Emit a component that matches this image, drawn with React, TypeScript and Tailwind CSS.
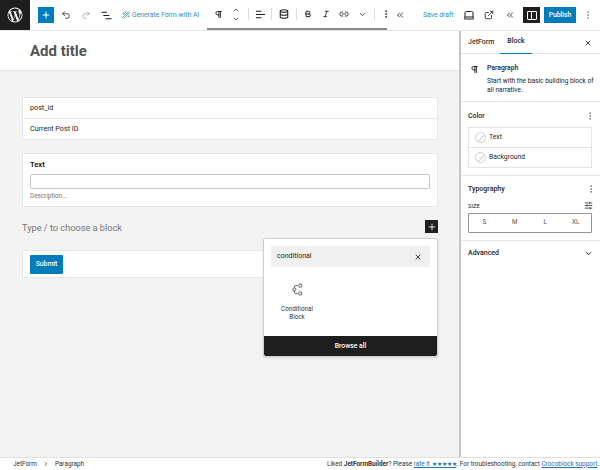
import React from 'react';
import { Plus, Undo2, Redo2, Wand2, Pilcrow, ChevronUp, ChevronDown, Database, Bold, Italic, Link2, MoreVertical, ChevronsLeft, Laptop, ExternalLink, X, SlidersHorizontal, ChevronRight } from 'lucide-react';

const WpLogo = () => (
  <svg viewBox="0 0 24 24" className="w-[18px] h-[18px]" fill="#fff">
    <path d="M12 2a10 10 0 1 0 0 20 10 10 0 0 0 0-20zM3.2 12c0-1.3.3-2.500.8-3.600l4.200 11.500A8.800 8.800 0 0 1 3.200 12zm8.800 8.800c-.9 0-1.700-.1-2.500-.4l2.600-7.700 2.700 7.500c0 0 0 .1.100.1-.9.300-1.900.5-2.900.5zm1.200-12.900c.5 0 1-.1 1-.1.500-.1.400-.8-.1-.7 0 0-1.400.1-2.300.1-.9 0-2.300-.1-2.300-.1-.5 0-.5.700-.1.700 0 0 .5.100.9.100l1.400 3.800-1.900 5.800-3.200-9.600c.5 0 1-.1 1-.1.500-.1.400-.8-.1-.7 0 0-1.400.1-2.300.1h-.6A8.800 8.800 0 0 1 18 5.600h-.1c-.9 0-1.500.7-1.500 1.500 0 .7.400 1.300.9 2.100.3.600.7 1.300.7 2.400 0 .7-.3 1.600-.7 2.700l-.9 3-3.200-9.400zm3.200 11.700 2.700-7.800c.5-1.300.7-2.300.7-3.200 0-.3 0-.6-.1-.9a8.800 8.800 0 0 1-3.300 11.900z" />
  </svg>
);

const ConditionalIcon = () => (
  <svg viewBox="0 0 14 16" className="w-[11px] h-[13px]" fill="none" stroke="#333" strokeWidth="1">
    <circle cx="3" cy="8" r="2" />
    <path d="M3 6V4.500Q3 3 5 3h2M3 10v1.500Q3 13 5 13h2" />
    <rect x="8.500" y="1" width="4" height="4" rx="1.500" />
    <rect x="8.500" y="11" width="4" height="4" rx="1.500" />
  </svg>
);

// three staggered lines, WP list view
const ListViewIcon = () => (
  <svg viewBox="0 0 12 12" className="w-[11px] h-[11px]" fill="none" stroke="#1e1e1e" strokeWidth="1.200">
    <path d="M0.500 2.500h6M2.500 6h6.500M5 9.500h6.500" />
  </svg>
);

const AlignIcon = () => (
  <svg viewBox="0 0 12 12" className="w-[11px] h-[11px]" fill="none" stroke="#1e1e1e" strokeWidth="1.100">
    <path d="M1 2.500h6M1 6h10M1 9.500h6" />
  </svg>
);

const Swatch = () => (
  <span className="relative w-[11px] h-[11px] rounded-full border border-[#cfcfcf] overflow-hidden shrink-0">
    <span className="absolute left-1/2 top-[-2px] h-[14px] w-px bg-[#cfcfcf] rotate-45" />
  </span>
);

const Sep = ({ className = '' }: { className?: string }) => (
  <span className={`w-px h-3 bg-[#ddd] shrink-0 ${className}`} />
);

const App: React.FC = () => {
  return (
    <div className="h-[470px] w-[600px] flex flex-col overflow-hidden bg-white text-[#1e1e1e] font-['Roboto',sans-serif]">
      {/* Top toolbar */}
      <header className="h-[31px] shrink-0 flex items-center border-b border-[#e5e5e5]">
        <div className="w-[30px] h-[30px] shrink-0 bg-[#1e1e1e] flex items-center justify-center">
          <WpLogo />
        </div>
        <div className="ml-2 w-4 h-4 shrink-0 bg-[#007cba] flex items-center justify-center">
          <Plus className="w-2.5 h-2.5 text-white" strokeWidth={2.5} />
        </div>
        <div className="w-[24px] flex justify-center shrink-0"><Undo2 className="w-[10px] h-[10px] text-[#333]" /></div>
        <div className="w-[16px] flex justify-center shrink-0"><Redo2 className="w-[10px] h-[10px] text-[#aaa]" /></div>
        <div className="w-[24px] flex justify-center shrink-0"><ListViewIcon /></div>
        <div className="ml-[4px] w-[85px] shrink-0 flex items-center gap-[2px] text-[#2b8fc4] text-[6.800px] leading-none whitespace-nowrap">
          <Wand2 className="w-2 h-2" />
          <span>Generate Form with AI</span>
        </div>
        <div className="w-[180px] h-[30px] shrink-0 flex items-center border-b-[2px] border-[#8a8a8a]">
          <div className="w-[22px] flex justify-center shrink-0"><Pilcrow className="w-[9px] h-[9px]" strokeWidth={2.500} /></div>
          <div className="w-[14px] flex flex-col items-center shrink-0">
            <ChevronUp className="w-2 h-2" />
            <ChevronDown className="w-2 h-2 mt-[1px]" />
          </div>
          <Sep className="ml-[5px]" />
          <div className="w-[22px] flex justify-center shrink-0"><AlignIcon /></div>
          <Sep />
          <div className="w-[24px] flex justify-center shrink-0"><Database className="w-[10px] h-[10px]" strokeWidth={2.500} /></div>
          <Sep />
          <div className="w-[22px] flex justify-center shrink-0"><Bold className="w-[8px] h-[8px]" strokeWidth={3} /></div>
          <div className="w-[14px] flex justify-center shrink-0"><Italic className="w-[8px] h-[8px]" strokeWidth={2.500} /></div>
          <div className="w-[22px] flex justify-center shrink-0"><Link2 className="w-[10px] h-[10px]" /></div>
          <div className="w-[14px] flex justify-center shrink-0"><ChevronDown className="w-[9px] h-[9px]" /></div>
          <Sep className="ml-[5px]" />
          <div className="w-[22px] flex justify-center shrink-0"><MoreVertical className="w-[10px] h-[10px]" /></div>
        </div>
        <ChevronsLeft className="ml-[8px] w-[10px] h-[10px] shrink-0" />
        <span className="ml-[18px] w-[28px] shrink-0 text-[6.800px] text-[#2b8fc4] whitespace-nowrap">Save draft</span>
        <Laptop className="ml-[12px] w-[12px] h-[12px] shrink-0" />
        <ExternalLink className="ml-[9px] w-[10px] h-[10px] shrink-0" />
        <ChevronsLeft className="ml-[11px] w-[10px] h-[10px] shrink-0" />
        <div className="ml-[8px] w-[17px] h-[16px] shrink-0 bg-[#1e1e1e] flex items-center justify-center">
          <div className="w-[10px] h-[9px] border border-white rounded-[1px] flex justify-center">
            <span className="w-px h-full bg-white" />
          </div>
        </div>
        <div className="ml-[4px] w-[32px] h-4 shrink-0 bg-[#007cba] text-white text-[6.800px] font-medium flex items-center justify-center">Publish</div>
        <MoreVertical className="ml-[7px] w-[10px] h-[10px] shrink-0 text-[#888]" />
      </header>

      <div className="flex-1 flex min-h-0">
        {/* Editor canvas */}
        <main className="w-[459px] shrink-0 flex flex-col bg-[#f3f3f3] relative">
          <div className="h-[40px] bg-white border-b border-[#e5e5e5] pl-[30px] pt-[2px] flex items-center">
            <span className="text-[15px] font-bold text-[#555] leading-none">Add title</span>
          </div>

          <div className="w-[416px] ml-[22px] mt-[26px] flex flex-col gap-[13px]">
            <div className="bg-white border border-[#e8e8e8] text-[7.200px]">
              <div className="h-[21px] pl-[7px] flex items-center border-b border-[#e8e8e8]">post_id</div>
              <div className="h-[20px] pl-[7px] flex items-center">Current Post ID</div>
            </div>

            <div className="h-[54px] bg-white border border-[#e8e8e8] px-[7px] pt-[6px]">
              <div className="text-[7.500px] font-bold leading-[10px]">Text</div>
              <div className="mt-[4px] h-[15px] border border-[#c8c8c8] rounded-[2px] bg-white" />
              <div className="mt-[3px] text-[6.300px] leading-[9px] text-[#757575]">Description...</div>
            </div>
          </div>

          <div className="w-[416px] ml-[22px] mt-[13px] h-[18px] flex items-start justify-between">
            <span className="text-[9.200px] leading-[16px] text-[#757575]">Type / to choose a block</span>
            <div className="w-[13px] h-[13px] bg-[#1e1e1e] flex items-center justify-center">
              <Plus className="w-2.5 h-2.5 text-white" strokeWidth={2} />
            </div>
          </div>

          <div className="w-[416px] ml-[22px] mt-[12px] h-[28px] bg-white border border-[#e8e8e8] pl-[7px] flex items-center">
            <div className="w-[33px] h-[19px] bg-[#007cba] rounded-[1px] text-white text-[6.800px] font-medium flex items-center justify-center">Submit</div>
          </div>

          {/* Block inserter popover */}
          <div className="absolute left-[263px] top-[207px] w-[175px] h-[119px] bg-white border border-[#d0d0d0] rounded-[2px] shadow-sm flex flex-col">
            <div className="mx-[7px] mt-[7px] h-[21px] bg-[#f0f0f0] flex items-center justify-between pl-[6px] pr-[8px]">
              <span className="text-[7px]">conditional</span>
              <X className="w-[8px] h-[8px]" strokeWidth={2.500} />
            </div>
            <div className="w-[48px] ml-[9px] mt-[16px] flex flex-col items-center">
              <ConditionalIcon />
              <div className="mt-[9px] text-[6.300px] leading-[8px] text-center text-[#333]">Conditional<br />Block</div>
            </div>
            <div className="mt-auto h-[20px] bg-[#1e1e1e] rounded-b-[2px] text-white text-[6.800px] font-medium flex items-center justify-center">Browse all</div>
          </div>
        </main>

        {/* Settings sidebar */}
        <aside className="flex-1 border-l-2 border-[#c4c4c4] flex flex-col">
          <div className="h-[23px] shrink-0 flex items-center border-b border-[#e5e5e5] text-[7px] font-medium relative">
            <span className="ml-[7px] w-[32px] text-[#333]">JetForm</span>
            <div className="w-[32px] h-[23px] border-b-[1.500px] border-[#007cba] flex items-center justify-center">Block</div>
            <X className="absolute right-[8px] top-[8px] w-2 h-2" strokeWidth={2.500} />
          </div>

          <div className="h-[48px] shrink-0 flex pl-[9px] pt-[10px] border-b border-[#e5e5e5]">
            <Pilcrow className="w-[9px] h-[9px] mt-[1px] shrink-0" strokeWidth={2.500} />
            <div className="ml-[8px]">
              <div className="text-[6.800px] font-medium leading-[9px]">Paragraph</div>
              <div className="mt-[4px] text-[6.600px] leading-[9px] w-[108px]">Start with the basic building block of all narrative.</div>
            </div>
          </div>

          <div className="h-[74px] shrink-0 px-[7px] pt-[9px] border-b border-[#e5e5e5]">
            <div className="flex items-center justify-between text-[7px] font-medium leading-[9px] pr-[1px]">
              <span>Color</span>
              <MoreVertical className="w-[10px] h-[10px] text-[#777] mr-[-3px]" />
            </div>
            <div className="mt-[6px] w-[124px] border border-[#e5e5e5] text-[6.800px]">
              <div className="h-[20px] flex items-center gap-[3px] pl-[6px] border-b border-[#e5e5e5]"><Swatch />Text</div>
              <div className="h-[19px] flex items-center gap-[3px] pl-[6px]"><Swatch />Background</div>
            </div>
          </div>

          <div className="h-[65px] shrink-0 px-[7px] pt-[8px] border-b border-[#e5e5e5]">
            <div className="flex items-center justify-between text-[7px] font-medium leading-[9px]">
              <span>Typography</span>
              <MoreVertical className="w-[10px] h-[10px] text-[#777] mr-[-3px]" />
            </div>
            <div className="mt-[7px] flex items-center justify-between text-[5.800px] leading-[8px]">
              <span>SIZE</span>
              <SlidersHorizontal className="w-[9px] h-[9px]" />
            </div>
            <div className="mt-[3px] w-[124px] h-[20px] border border-[#949494] rounded-[1px] grid grid-cols-4 text-[6.300px] text-[#555] place-items-center">
              <span>S</span>
              <span>M</span>
              <span>L</span>
              <span>XL</span>
            </div>
          </div>

          <div className="h-[24px] shrink-0 px-[7px] flex items-center justify-between text-[7px] font-medium">
            <span>Advanced</span>
            <ChevronDown className="w-[9px] h-[9px]" strokeWidth={2.500} />
          </div>
        </aside>
      </div>

      {/* Footer breadcrumb */}
      <footer className="h-[13px] shrink-0 border-t border-[#e0e0e0] flex items-center justify-between pl-[13px] pr-[1px] text-[6.400px] leading-none text-[#333] whitespace-nowrap">
        <div className="flex items-center">
          <span>JetForm</span>
          <ChevronRight className="w-[6px] h-[6px] mx-[6px]" strokeWidth={3} />
          <span>Paragraph</span>
        </div>
        <div>
          Liked <b>JetFormBuilder</b>? Please <span className="underline text-[#2271b1]">rate it ★★★★★</span>. For troubleshooting, contact <span className="underline text-[#2271b1]">Crocoblock support</span>.
        </div>
      </footer>
    </div>
  );
};

export default App;
